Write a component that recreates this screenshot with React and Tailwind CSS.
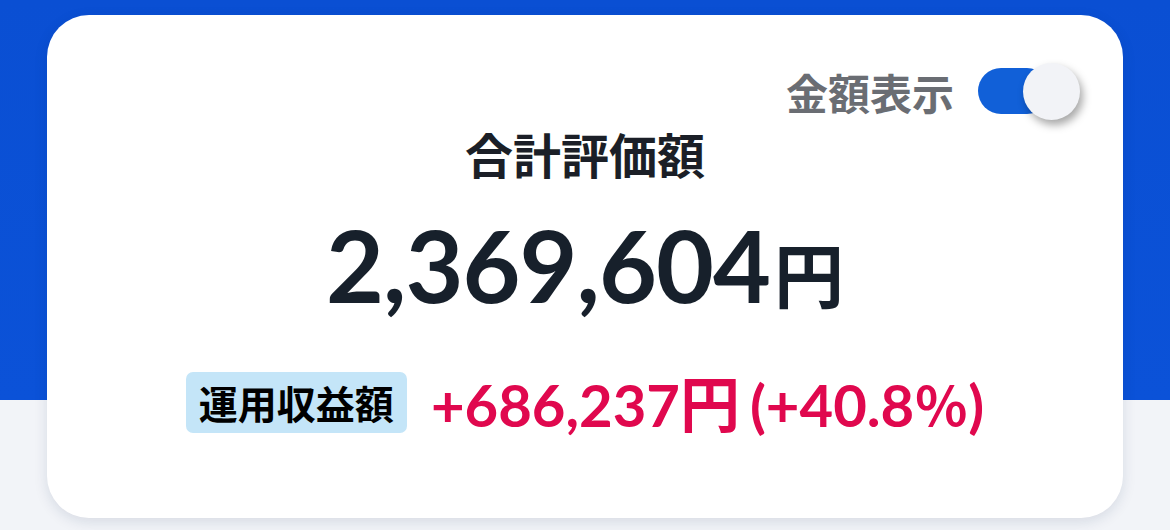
import { useState } from "react";

const jp = "font-['Noto_Sans_CJK_JP','Noto_Sans',sans-serif]";
const num = "font-['Lato','Noto_Sans_CJK_JP',sans-serif]";

const Toggle = ({ on, onChange }) => (
  <button
    onClick={() => onChange(!on)}
    className="relative h-[58px] w-[102px]"
    aria-pressed={on}
  >
    <span
      className={`absolute left-0 top-[5px] h-[46px] w-[72px] rounded-full ${on ? "bg-[#1160d8]" : "bg-gray-300"}`}
    />
    <span
      className={`absolute top-0 h-[57px] w-[57px] rounded-full bg-[#f2f3f7] shadow-[3px_5px_8px_rgba(0,0,0,0.35)] ${on ? "left-[45px]" : "left-0"}`}
    />
  </button>
);

export default function App() {
  const [show, setShow] = useState(true);

  return (
    <div className="h-[530px] w-[1170px] overflow-hidden bg-[linear-gradient(to_bottom,#0a4fd3_0px,#0b52d8_400px,#f2f4f8_400px)] pt-[15px]">
      <div className="ml-[47px] flex h-[503px] w-[1076px] flex-col rounded-[42px] bg-white shadow-[0_4px_14px_rgba(20,40,80,0.12)]">
        <div className="flex items-center justify-end gap-[24px] pr-[43px] pt-[48px]">
          <span className={`${jp} text-[42px] font-bold leading-none text-[#6a6d73]`}>金額表示</span>
          <Toggle on={show} onChange={setShow} />
        </div>

        <h2 className={`${jp} mt-[8px] text-center text-[48px] font-bold leading-none text-[#1b1f27]`}>
          合計評価額
        </h2>

        <div className="mt-[37px] flex items-baseline justify-center text-[#17202b]">
          <span className={`${num} text-[100px] font-bold leading-none tracking-[-1px]`}>
            {show ? "2,369,604" : "*********"}
          </span>
          <span className={`${jp} ml-[4px] text-[70px] font-bold leading-none`}>円</span>
        </div>

        <div className="mt-[57px] flex items-center justify-center gap-[24px]">
          <span className={`${jp} rounded-[7px] bg-[#c4e5f8] px-[13px] py-[8px] text-[39px] font-bold leading-[45px] text-black`}>
            運用収益額
          </span>
          <span className="flex items-baseline text-[#e0084e]">
            <span className={`${num} text-[58px] font-bold leading-none`}>+686,237</span>
            <span className={`${jp} text-[60px] font-bold leading-none`}>円</span>
            <span className={`${num} ml-[10px] text-[58px] font-bold leading-none`}>(+40.8</span>
            <span className={`${jp} text-[54px] font-bold leading-none`}>％</span>
            <span className={`${num} text-[58px] font-bold leading-none`}>)</span>
          </span>
        </div>
      </div>
    </div>
  );
}
